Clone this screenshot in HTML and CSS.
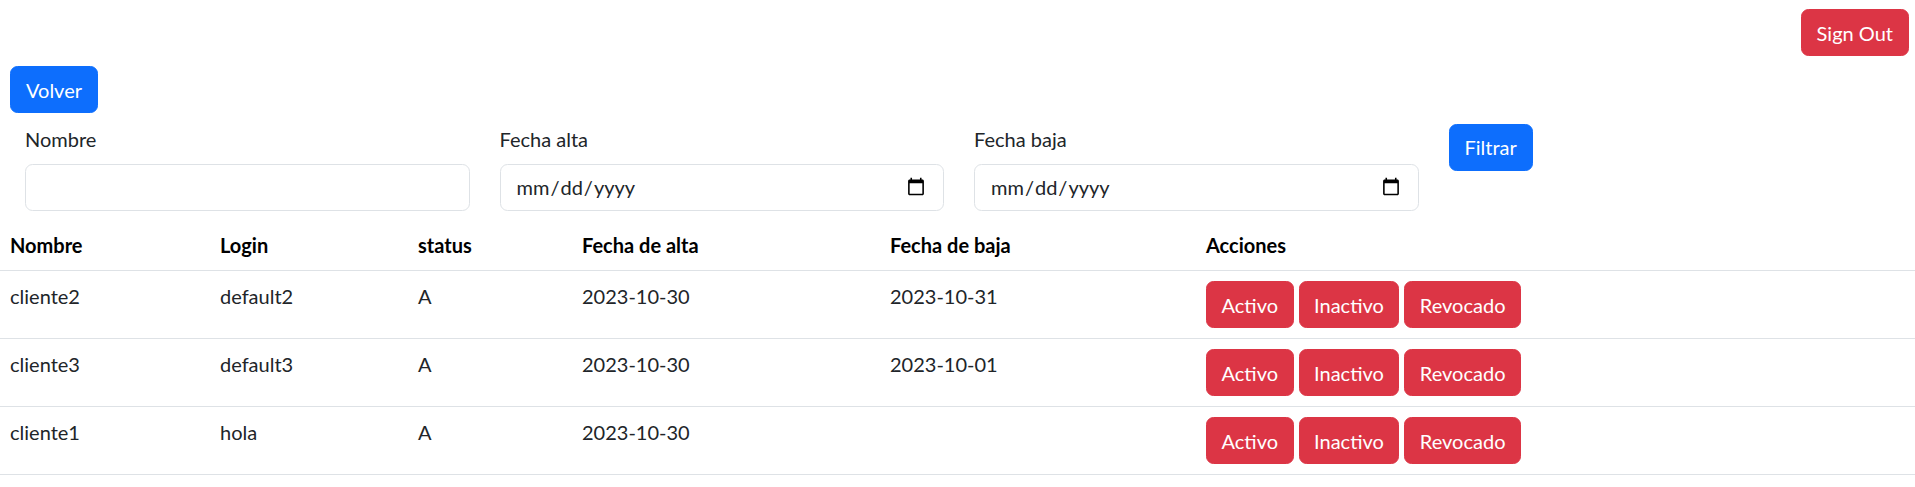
FILE: index.html
```html
<!DOCTYPE html>
<html lang="es">
<head>
<meta charset="utf-8">
<title>Clientes</title>
<link rel="stylesheet" href="styles.css">
</head>
<body>
<div class="topbar">
  <button class="btn btn-danger">Sign Out</button>
</div>
<div class="back">
  <button class="btn btn-primary">Volver</button>
</div>
<form class="filters">
  <div class="field">
    <label class="form-label">Nombre</label>
    <input class="form-control" type="text">
  </div>
  <div class="field">
    <label class="form-label">Fecha alta</label>
    <input class="form-control" type="date">
  </div>
  <div class="field">
    <label class="form-label">Fecha baja</label>
    <input class="form-control" type="date">
  </div>
  <div class="field">
    <button type="button" class="btn btn-primary">Filtrar</button>
  </div>
</form>
<table class="table">
  <colgroup>
    <col class="c1"><col class="c2"><col class="c3"><col class="c4"><col class="c5"><col>
  </colgroup>
  <thead>
    <tr><th>Nombre</th><th>Login</th><th>status</th><th>Fecha de alta</th><th>Fecha de baja</th><th>Acciones</th></tr>
  </thead>
  <tbody>
    <tr>
      <td>cliente2</td><td>default2</td><td>A</td><td>2023-10-30</td><td>2023-10-31</td>
      <td><div class="actions"><button class="btn btn-danger">Activo</button><button class="btn btn-danger">Inactivo</button><button class="btn btn-danger">Revocado</button></div></td>
    </tr>
    <tr>
      <td>cliente3</td><td>default3</td><td>A</td><td>2023-10-30</td><td>2023-10-01</td>
      <td><div class="actions"><button class="btn btn-danger">Activo</button><button class="btn btn-danger">Inactivo</button><button class="btn btn-danger">Revocado</button></div></td>
    </tr>
    <tr>
      <td>cliente1</td><td>hola</td><td>A</td><td>2023-10-30</td><td></td>
      <td><div class="actions"><button class="btn btn-danger">Activo</button><button class="btn btn-danger">Inactivo</button><button class="btn btn-danger">Revocado</button></div></td>
    </tr>
  </tbody>
</table>
</body>
</html>
```
FILE: styles.css
```css
* { box-sizing: border-box; }
html, body {
  margin: 0;
  padding: 0;
  background: #fff;
}
body {
  font-family: Lato, "Noto Sans", sans-serif;
  font-size: 20px;
  line-height: 1.5;
  color: #212529;
}
.btn {
  display: inline-block;
  font: inherit;
  line-height: 30px;
  padding: 7.5px 15px;
  border: 1px solid transparent;
  border-radius: 7.5px;
  color: #fff;
  cursor: pointer;
  margin: 0;
}
.btn-primary { background: #0d6efd; border-color: #0d6efd; }
.btn-danger { background: #dc3545; border-color: #dc3545; }

.topbar {
  display: flex;
  justify-content: flex-end;
  padding: 9px 6px 0 0;
}
.back {
  padding: 10px 0 0 10px;
}
.filters {
  display: grid;
  grid-template-columns: repeat(4, 444.5px);
  column-gap: 30px;
  padding: 10.5px 0 0 25px;
  margin: 0 0 9.5px 0;
}
.field { display: flex; flex-direction: column; align-items: flex-start; }
.form-label {
  display: block;
  line-height: 30px;
  margin-bottom: 10px;
}
.form-control {
  display: block;
  width: 100%;
  height: 47px;
  font: inherit;
  color: #212529;
  padding: 7.5px 15px;
  border: 1px solid #dee2e6;
  border-radius: 7.5px;
  background: #fff;
}
.table {
  width: 100%;
  border-collapse: collapse;
  table-layout: fixed;
  color: #212529;
}
.c1 { width: 210px; }
.c2 { width: 198px; }
.c3 { width: 164px; }
.c4 { width: 308px; }
.c5 { width: 316px; }
.table th, .table td {
  text-align: left;
  vertical-align: top;
  padding: 10px;
  border-bottom: 1px solid #dee2e6;
}
.table th { font-weight: 700; color: #000; }
.actions { display: flex; gap: 5px; }
.actions .btn { padding-left: 14.5px; padding-right: 14.5px; }
```
